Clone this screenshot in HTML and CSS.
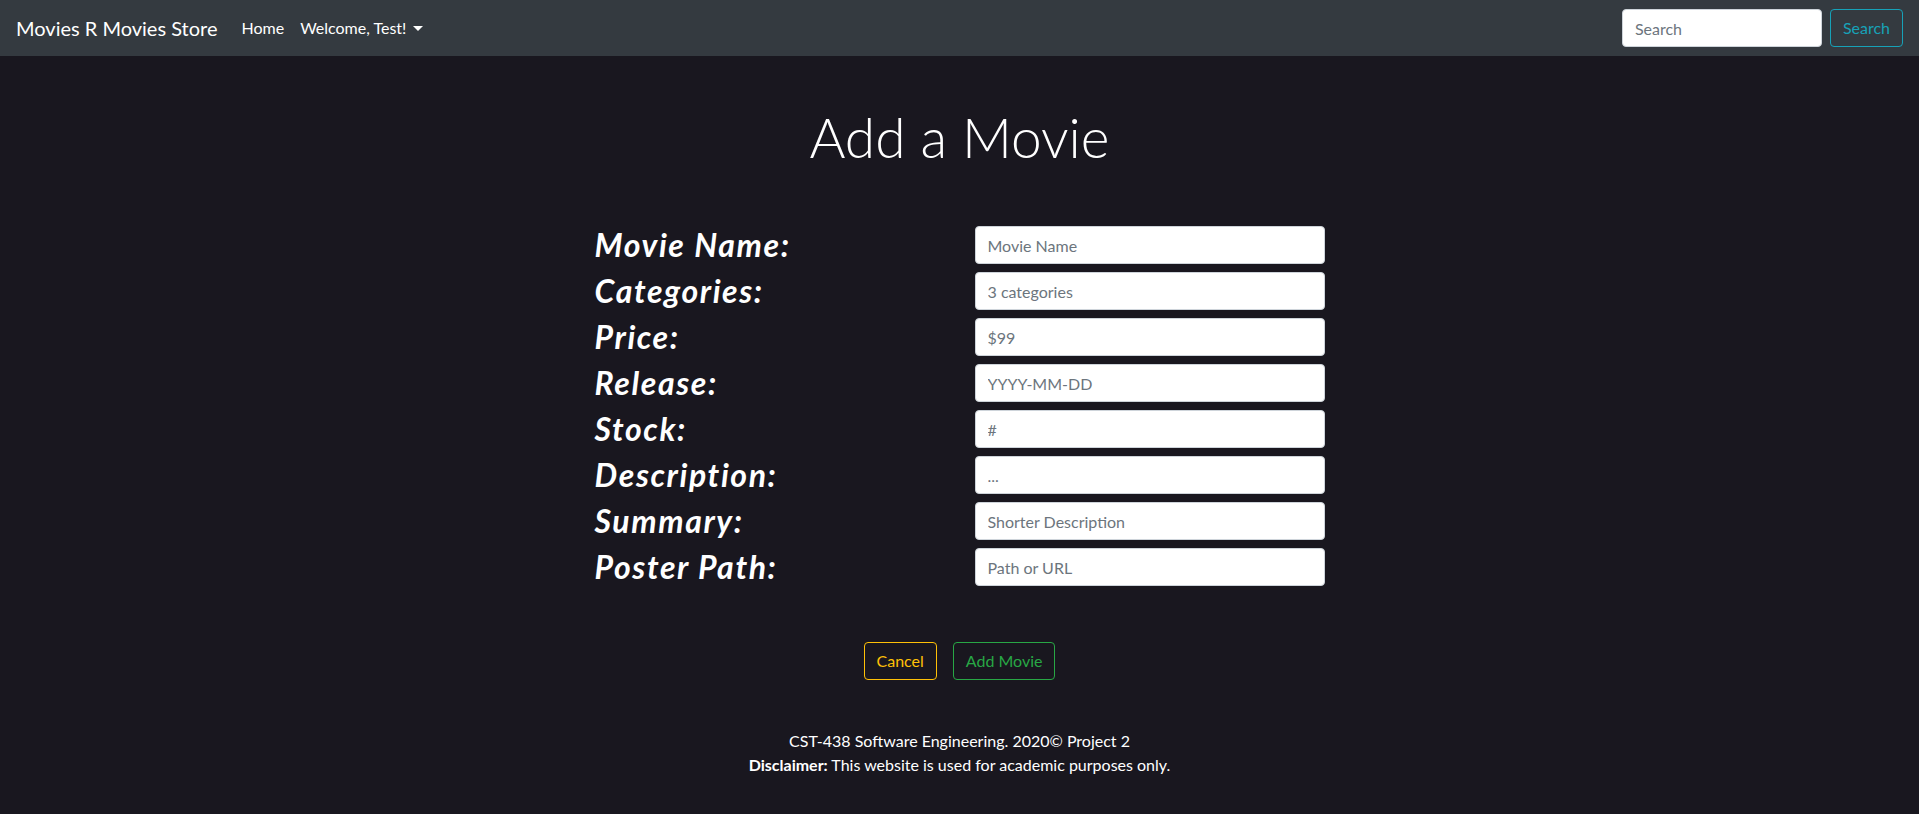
FILE: index.html
```html
<!DOCTYPE html>
<html lang="en">
<head>
<meta charset="utf-8">
<title>Add a Movie</title>
<link rel="stylesheet" href="styles.css">
</head>
<body>
<nav class="navbar">
  <div class="nav-left">
    <a class="brand" href="#">Movies R Movies Store</a>
    <a class="nav-link" href="#">Home</a>
    <a class="nav-link dropdown-toggle" href="#">Welcome, Test!</a>
  </div>
  <form class="search-form">
    <input class="search-input" type="text" placeholder="Search">
    <button class="btn btn-info" type="button">Search</button>
  </form>
</nav>
<main class="main">
  <h1 class="title">Add a Movie</h1>
  <form class="movie-form">
    <label class="field-label">Movie Name:</label><input class="field" type="text" placeholder="Movie Name">
    <label class="field-label">Categories:</label><input class="field" type="text" placeholder="3 categories">
    <label class="field-label">Price:</label><input class="field" type="text" placeholder="$99">
    <label class="field-label">Release:</label><input class="field" type="text" placeholder="YYYY-MM-DD">
    <label class="field-label">Stock:</label><input class="field" type="text" placeholder="#">
    <label class="field-label">Description:</label><input class="field" type="text" placeholder="...">
    <label class="field-label">Summary:</label><input class="field" type="text" placeholder="Shorter Description">
    <label class="field-label">Poster Path:</label><input class="field" type="text" placeholder="Path or URL">
  </form>
  <div class="actions">
    <button class="btn btn-warning" type="button">Cancel</button>
    <button class="btn btn-success" type="button">Add Movie</button>
  </div>
</main>
<footer class="footer">
  <div>CST-438 Software Engineering. 2020© Project 2</div>
  <div><strong>Disclaimer:</strong> This website is used for academic purposes only.</div>
</footer>
</body>
</html>
```
FILE: styles.css
```css
* { box-sizing: border-box; }
html, body { margin: 0; padding: 0; }
body {
  background: #19171f;
  color: #fff;
  font-family: Lato, "Noto Sans", sans-serif;
  font-size: 16px;
  line-height: 1.5;
  min-height: 814px;
}
a { text-decoration: none; }

.navbar {
  display: flex;
  align-items: center;
  justify-content: space-between;
  height: 56px;
  padding: 8px 16px;
  background: #343a40;
}
.nav-left { display: flex; align-items: center; }
.brand {
  color: #fff;
  font-size: 20px;
  line-height: 30px;
  padding: 5px 0;
  margin-right: 16px;
}
.nav-link {
  color: #fff;
  padding: 8px;
  font-size: 16px;
}
.dropdown-toggle::after {
  content: "";
  display: inline-block;
  margin-left: 7px;
  vertical-align: 3px;
  border-top: 5px solid #fff;
  border-left: 5px solid transparent;
  border-right: 5px solid transparent;
}
.search-form { display: flex; align-items: center; }
.search-input {
  width: 200px;
  height: 38px;
  margin-right: 8px;
  padding: 6px 12px;
  font: inherit;
  color: #495057;
  background: #fff;
  border: 1px solid #ced4da;
  border-radius: 4px;
}
.search-input::placeholder, .field::placeholder { color: #6c757d; }

.btn {
  font: inherit;
  font-size: 16px;
  line-height: 24px;
  padding: 6px 12px;
  background: transparent;
  border: 1px solid;
  border-radius: 4px;
  cursor: pointer;
}
.btn-info { color: #17a2b8; border-color: #17a2b8; }
.btn-warning { color: #ffc107; border-color: #ffc107; }
.btn-success { color: #28a745; border-color: #28a745; }

.main { display: flex; flex-direction: column; align-items: center; }
.title {
  margin: 48px 0 56px;
  font-size: 55px;
  font-weight: 300;
  line-height: 1.2;
}
.movie-form {
  display: grid;
  grid-template-columns: 380px 350px;
  row-gap: 8px;
  align-items: center;
}
.field-label {
  font-size: 32px;
  font-weight: 700;
  font-style: italic;
  line-height: 38px;
  letter-spacing: 1.6px;
}
.field {
  height: 38px;
  padding: 6px 12px;
  font: inherit;
  font-size: 16px;
  color: #495057;
  background: #fff;
  border: 1px solid #ced4da;
  border-radius: 4px;
}
.actions {
  display: flex;
  gap: 16px;
  margin-top: 56px;
}
.footer {
  margin-top: 49px;
  text-align: center;
  font-size: 16px;
  line-height: 24px;
}
```
